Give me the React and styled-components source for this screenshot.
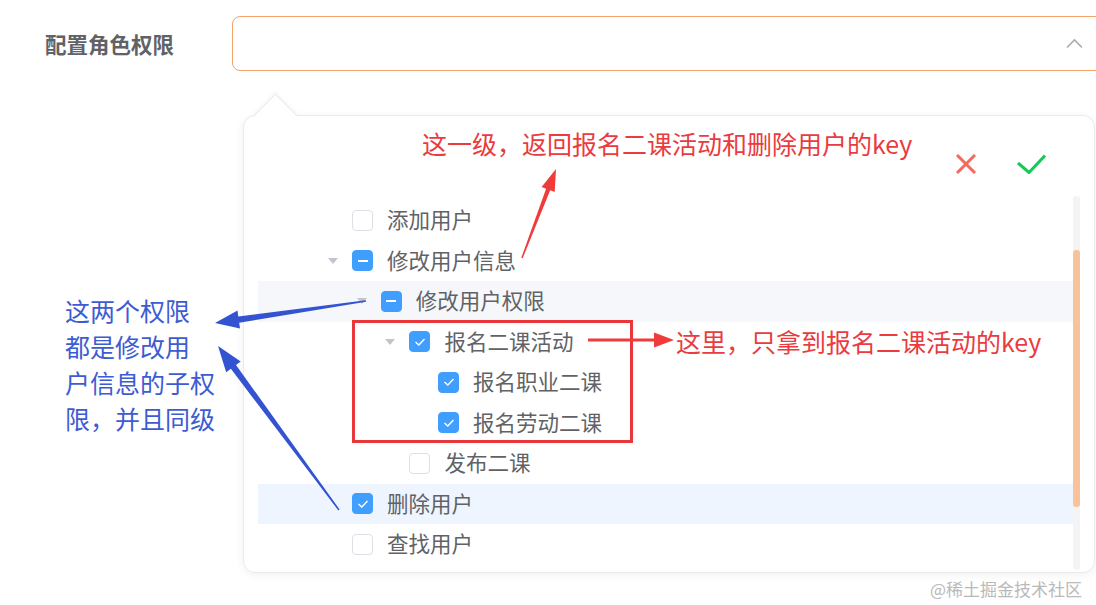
import React from "react";
import styled, { createGlobalStyle } from "styled-components";

const GlobalStyle = createGlobalStyle`
    html, body {
        margin: 0;
        padding: 0;
        background: #ffffff;
        overflow: hidden;
    }
    * {
        box-sizing: border-box;
    }
`;

const CJK = `"Noto Sans CJK SC", "Noto Sans", sans-serif`;

const Page = styled.div`
    position: relative;
    width: 1096px;
    height: 605px;
    overflow: hidden;
    padding-top: 16px;
    font-family: ${CJK};
`;

const FormRow = styled.div`
    display: flex;
    align-items: center;
`;

const Label = styled.div`
    width: 232px;
    flex-shrink: 0;
    padding-left: 45px;
    font-size: 21.5px;
    font-weight: 700;
    color: #606266;
`;

const Select = styled.div`
    width: 880px;
    height: 55px;
    flex-shrink: 0;
    border: 1px solid #f2a469;
    border-radius: 8px;
    display: flex;
    align-items: center;
    justify-content: flex-end;
    padding-right: 28px;
`;

const Popup = styled.div`
    position: relative;
    margin-left: 243px;
    margin-top: 44px;
    width: 852px;
    height: 458px;
    border: 1px solid #e8eaee;
    border-radius: 12px;
    background: #fff;
    box-shadow: 0 2px 10px rgba(0, 0, 0, 0.06);

    &::before {
        content: "";
        position: absolute;
        left: 16px;
        top: -16px;
        width: 30px;
        height: 30px;
        background: #fff;
        border-top: 1px solid #e8eaee;
        border-left: 1px solid #e8eaee;
        transform: rotate(45deg);
        box-shadow: -2px -2px 4px rgba(0, 0, 0, 0.03);
    }
`;

const Actions = styled.div`
    height: 80px;
    display: flex;
    justify-content: flex-end;
    align-items: flex-start;
    gap: 40px;
    padding-top: 38px;
    padding-right: 48px;
`;

const Body = styled.div`
    display: flex;
    padding-left: 14px;
`;

const Tree = styled.div`
    width: 815px;
    height: 374px;
    overflow: hidden;
    padding-top: 4px;
`;

const Row = styled.div`
    display: flex;
    align-items: center;
    height: 40.5px;
    padding-left: ${(p) => 63 + p.level * 28.7}px;
    background: ${(p) =>
        p.tone === "hover" ? "#f5f7fa" : p.tone === "current" ? "#eef5fe" : "transparent"};
`;

const Caret = styled.span`
    width: 24px;
    height: 24px;
    display: flex;
    align-items: center;
    justify-content: center;
    margin-right: 7px;

    &::after {
        content: "";
        display: ${(p) => (p.show ? "block" : "none")};
        border-left: 5px solid transparent;
        border-right: 5px solid transparent;
        border-top: 6px solid #c0c4cc;
    }
`;

const Box = styled.span`
    width: 21px;
    height: 21px;
    border-radius: 4px;
    flex-shrink: 0;
    display: flex;
    align-items: center;
    justify-content: center;
    border: 1px solid ${(p) => (p.state === "none" ? "#dcdfe6" : "#409eff")};
    background: ${(p) => (p.state === "none" ? "#fff" : "#409eff")};
`;

const Dash = styled.span`
    width: 10px;
    height: 2px;
    background: #fff;
`;

const NodeText = styled.span`
    margin-left: 14px;
    margin-top: -3px;
    font-size: 21.5px;
    color: #606266;
    line-height: 1;
`;

const Scrollbar = styled.div`
    width: 7px;
    height: 374px;
    background: #f4f4f6;
    border-radius: 3px;
    padding-top: 54px;
`;

const Thumb = styled.div`
    width: 7px;
    height: 257px;
    border-radius: 3px;
    background: #f8c29b;
`;

const Overlay = styled.svg`
    position: absolute;
    left: 0;
    top: 0;
    pointer-events: none;
`;

const Note = styled.div`
    position: absolute;
    left: ${(p) => p.x}px;
    top: ${(p) => p.y}px;
    font-size: 25px;
    line-height: ${(p) => p.lh || 30}px;
    color: ${(p) => p.color};
    white-space: nowrap;
    font-family: ${CJK};
`;

const RedFrame = styled.div`
    position: absolute;
    left: 352px;
    top: 320px;
    width: 281px;
    height: 123px;
    border: 3px solid #e8363b;
`;

const Watermark = styled.div`
    position: absolute;
    left: 930px;
    top: 576px;
    font-size: 17px;
    color: #b9b9b9;
    font-family: "Noto Sans CJK SC", serif;
`;

const nodes = [
    { label: "添加用户", level: 0, state: "none" },
    { label: "修改用户信息", level: 0, state: "half", open: true },
    { label: "修改用户权限", level: 1, state: "half", open: true, tone: "hover" },
    { label: "报名二课活动", level: 2, state: "checked", open: true },
    { label: "报名职业二课", level: 3, state: "checked" },
    { label: "报名劳动二课", level: 3, state: "checked" },
    { label: "发布二课", level: 2, state: "none" },
    { label: "删除用户", level: 0, state: "checked", tone: "current" },
    { label: "查找用户", level: 0, state: "none" },
];

// tapered arrow: thin tail, wider shaft near the head
function arrow(x1, y1, x2, y2, head, headW, shaft, tail) {
    const len = Math.hypot(x2 - x1, y2 - y1);
    const dx = (x2 - x1) / len;
    const dy = (y2 - y1) / len;
    const nx = -dy;
    const ny = dx;
    const bx = x2 - dx * head;
    const by = y2 - dy * head;
    const pts = [
        [x1 + nx * tail, y1 + ny * tail],
        [bx + nx * shaft, by + ny * shaft],
        [bx + nx * headW, by + ny * headW],
        [x2, y2],
        [bx - nx * headW, by - ny * headW],
        [bx - nx * shaft, by - ny * shaft],
        [x1 - nx * tail, y1 - ny * tail],
    ];
    return pts.map((p) => p.map((v) => v.toFixed(1)).join(",")).join(" ");
}

function Checkbox({ state }) {
    return (
        <Box state={state}>
            {state === "half" && <Dash />}
            {state === "checked" && (
                <svg width="12" height="10" viewBox="0 0 12 10">
                    <polyline points="1.5,5 4.8,8 10.5,2" fill="none" stroke="#fff" strokeWidth="1.4" />
                </svg>
            )}
        </Box>
    );
}

export default function App() {
    return (
        <Page>
            <GlobalStyle />
            <FormRow>
                <Label>配置角色权限</Label>
                <Select>
                    <svg width="17" height="11" viewBox="0 0 17 11">
                        <polyline points="1,9.5 8.5,2 16,9.5" fill="none" stroke="#a8abb2" strokeWidth="1.6" />
                    </svg>
                </Select>
            </FormRow>

            <Popup>
                <Actions>
                    <svg width="22" height="20" viewBox="0 0 22 20">
                        <line x1="2" y1="1" x2="20" y2="19" stroke="#f46a5c" strokeWidth="3" />
                        <line x1="20" y1="1" x2="2" y2="19" stroke="#f46a5c" strokeWidth="3" />
                    </svg>
                    <svg width="29" height="20" viewBox="0 0 29 20">
                        <polyline points="1,9 12,18.5 28,1.5" fill="none" stroke="#19c85a" strokeWidth="3" />
                    </svg>
                </Actions>
                <Body>
                    <Tree>
                        {nodes.map((n) => (
                            <Row key={n.label} level={n.level} tone={n.tone}>
                                <Caret show={n.open} />
                                <Checkbox state={n.state} />
                                <NodeText>{n.label}</NodeText>
                            </Row>
                        ))}
                    </Tree>
                    <Scrollbar>
                        <Thumb />
                    </Scrollbar>
                </Body>
            </Popup>

            <RedFrame />
            <Note x={422} y={128} color="#ea3b3e">这一级，返回报名二课活动和删除用户的key</Note>
            <Note x={676} y={326} color="#ea3b3e">这里，只拿到报名二课活动的key</Note>
            <Note x={65} y={292} lh={36} color="#3d5bd3">
                这两个权限<br />都是修改用<br />户信息的子权<br />限，并且同级
            </Note>

            <Overlay width="1096" height="605" viewBox="0 0 1096 605">
                <polygon points={arrow(522, 258, 556, 169, 22, 7, 2.2, 0.7)} fill="#f03b3b" />
                <polygon points={arrow(588, 340, 674, 340, 20, 7.5, 1.6, 1.6)} fill="#f03b3b" />
                <polygon points={arrow(366, 301, 215, 323, 24, 9, 3.2, 0.8)} fill="#3453d1" />
                <polygon points={arrow(339, 510, 218, 346, 26, 9, 3.2, 0.8)} fill="#3453d1" />
            </Overlay>

            <Watermark>@稀土掘金技术社区</Watermark>
        </Page>
    );
}
